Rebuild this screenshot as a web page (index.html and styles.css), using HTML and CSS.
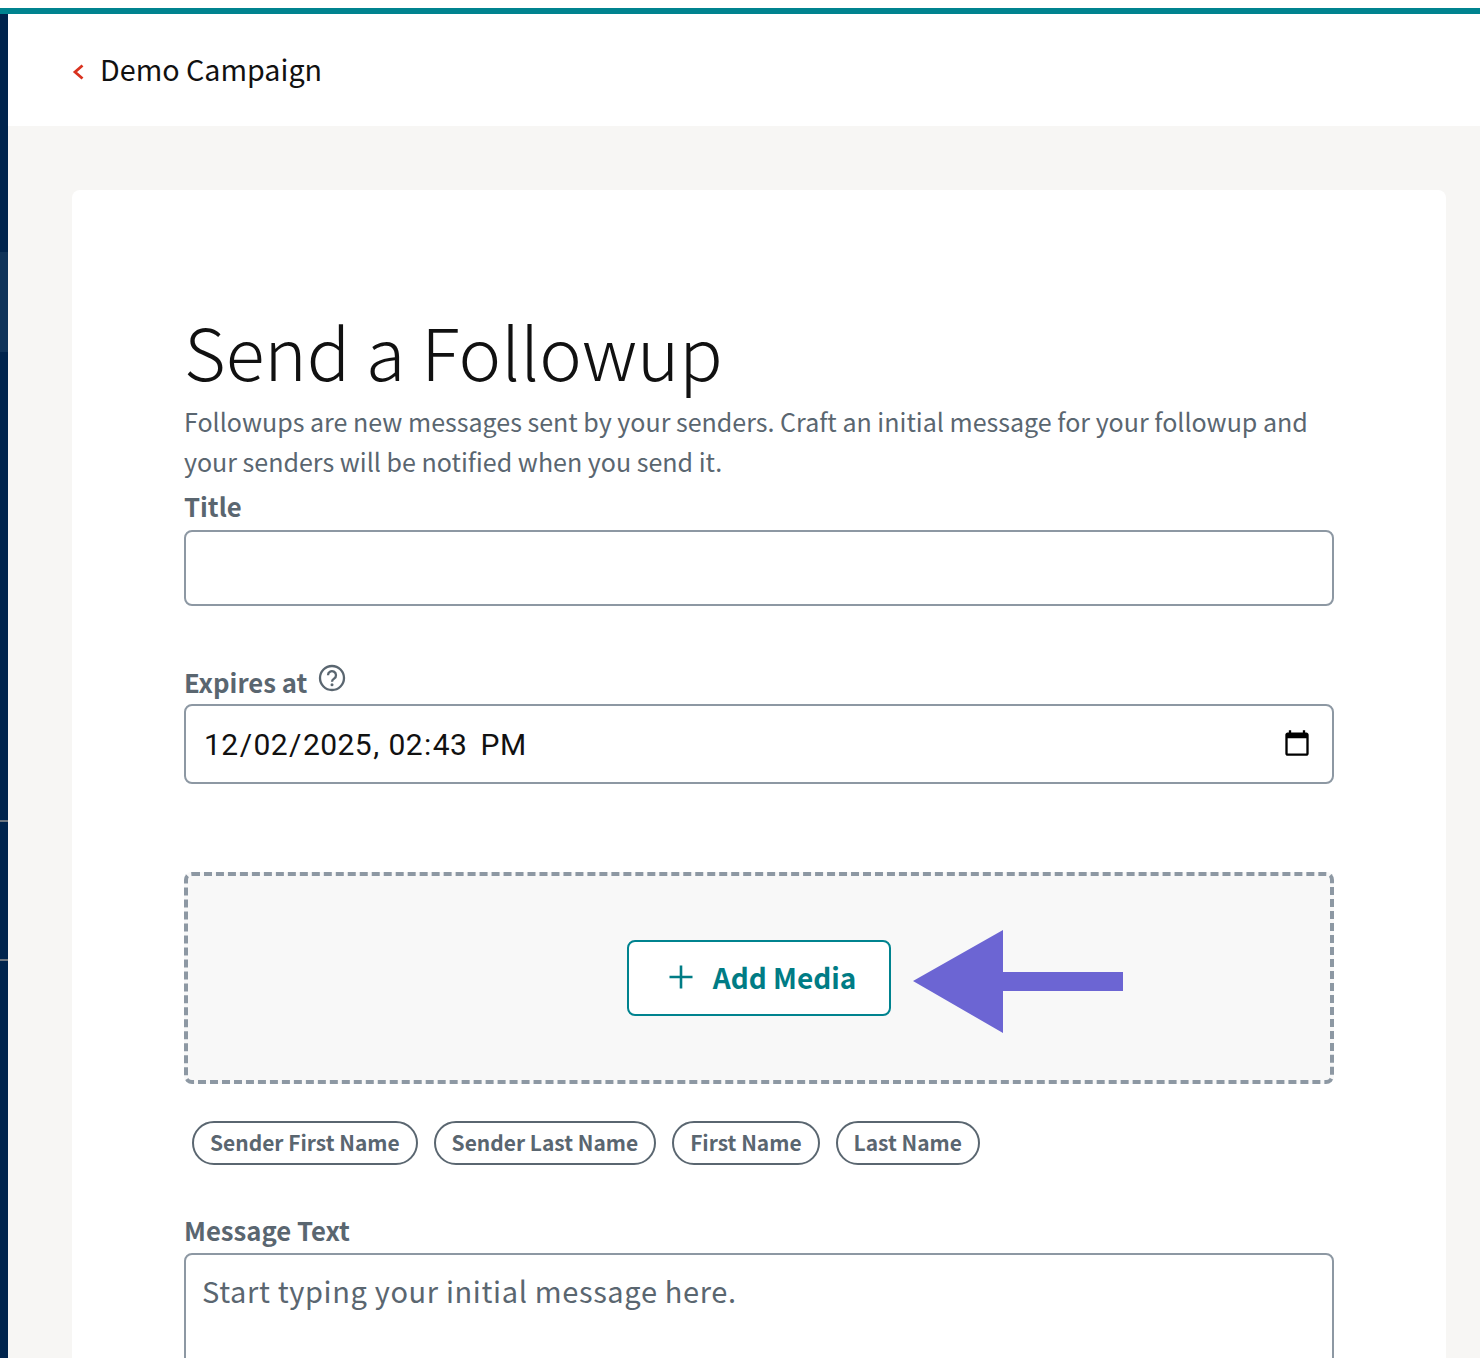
FILE: index.html
```html
<!DOCTYPE html>
<html lang="en">
<head>
    <meta charset="UTF-8">
    <meta name="viewport" content="width=device-width, initial-scale=1.0">
    <title>Send a Followup</title>
    <link rel="stylesheet" href="styles.css">
</head>
<body>
    <div class="topbar"></div>
    <div class="app">
        <aside class="sidebar">
            <span class="sidebar-band"></span>
            <span class="sidebar-line sidebar-line-first"></span>
            <span class="sidebar-line sidebar-line-second"></span>
        </aside>
        <div class="main">
            <header class="page-header">
                <a class="back-link" href="#">
                    <svg class="back-icon" width="12" height="16" viewBox="0 0 12 16" aria-hidden="true">
                        <path d="M10.500 1.500 3 8l7.500 6.500" fill="none" stroke="#d9321f" stroke-width="2.800"/>
                    </svg>
                    Demo Campaign
                </a>
            </header>
            <div class="page-body">
                <main class="card">
                    <h1 class="card-title">Send a Followup</h1>
                    <p class="card-intro">Followups are new messages sent by your senders. Craft an initial message for your followup and your senders will be notified when you send it.</p>

                    <label class="field-label title-label" for="title">Title</label>
                    <input class="text-input" id="title" type="text">

                    <label class="field-label expires-label" for="expires">
                        Expires at
                        <svg class="help-icon" width="28" height="28" viewBox="0 0 28 28" aria-hidden="true">
                            <circle cx="14" cy="14" r="12" fill="none" stroke="#5a6670" stroke-width="2.300"/>
                            <path d="M10 11.200a4 4 0 1 1 6.200 3.300c-1.500.9-2.200 1.500-2.200 3.200" fill="none" stroke="#5a6670" stroke-width="2.300"/>
                            <circle cx="14" cy="20.800" r="1.500" fill="#5a6670"/>
                        </svg>
                    </label>
                    <input class="date-input" id="expires" type="datetime-local" value="2025-12-02T14:43">

                    <div class="media-box">
                        <button class="media-button" type="button">
                            <svg width="26" height="26" viewBox="0 0 26 26" aria-hidden="true">
                                <path d="M13 1.500v23M1.500 13h23" fill="none" stroke="#007c85" stroke-width="2.600"/>
                            </svg>
                            Add Media
                        </button>
                        <svg class="media-arrow" width="210" height="104" viewBox="0 0 210 104" aria-hidden="true">
                            <path d="M0 51 90 0v42h120v19H90v42z" fill="#6c65d3"/>
                        </svg>
                    </div>

                    <div class="chips">
                        <button class="chip" type="button">Sender First Name</button>
                        <button class="chip" type="button">Sender Last Name</button>
                        <button class="chip" type="button">First Name</button>
                        <button class="chip" type="button">Last Name</button>
                    </div>

                    <label class="field-label message-label" for="message">Message Text</label>
                    <textarea class="message-input" id="message" placeholder="Start typing your initial message here."></textarea>
                </main>
            </div>
        </div>
    </div>
</body>
</html>
```

FILE: styles.css
```css
html, body {
    height: 1358px;
    overflow: hidden;
}
body {
    margin: 0;
    padding-top: 8px;
    box-sizing: border-box;
    background-color: #fff;
    font-family: "Noto Sans CJK SC", "Noto Sans", sans-serif;
    color: #5a6670;
}
.topbar {
    height: 6px;
    background-color: #00838f;
}
.app {
    display: flex;
    height: 1344px;
    overflow: hidden;
}
.sidebar {
    position: relative;
    flex: 0 0 8px;
    background-color: #00244d;
}
.sidebar-band {
    position: absolute;
    top: 238px;
    left: 0;
    right: 0;
    height: 100px;
    background-color: #0f3359;
}
.sidebar-line {
    position: absolute;
    left: 0;
    right: 0;
    height: 2px;
    background-color: #6d7680;
}
.sidebar-line-first {
    top: 806px;
}
.sidebar-line-second {
    top: 945px;
}
.main {
    flex: 1;
    min-width: 0;
    background-color: #f7f6f4;
}
.page-header {
    box-sizing: border-box;
    height: 112px;
    padding: 0 0 4px 64px;
    display: flex;
    align-items: center;
    background-color: #fff;
}
.back-link {
    display: flex;
    align-items: center;
    gap: 16px;
    color: #111;
    font-size: 28.700px;
    text-decoration: none;
}
.back-icon {
    margin-top: 7px;
}
.page-body {
    padding: 64px 34px 0 64px;
}
.card {
    height: 1200px;
    padding: 109px 112px 0;
    border-radius: 8px;
    background-color: #fff;
}
.card-title {
    margin: 0;
    font-size: 71.800px;
    font-weight: 300;
    line-height: 102px;
    color: #111;
}
.card-intro {
    margin: 0;
    font-size: 25.040px;
    line-height: 40px;
}
.field-label {
    display: block;
    font-size: 25.700px;
    font-weight: 700;
    line-height: 40px;
}
.title-label {
    margin-top: 5px;
}
.text-input, .date-input, .message-input {
    display: block;
    box-sizing: border-box;
    width: 100%;
    border: 2px solid #8d98a3;
    border-radius: 8px;
    background-color: #fff;
}
.text-input {
    height: 76px;
    margin-top: 4px;
}
.expires-label {
    display: flex;
    align-items: flex-start;
    gap: 11px;
    margin: 58px 0 4px;
    line-height: 36px;
}
.date-input {
    height: 80px;
    padding: 0 18px 0 17px;
    font-family: "Roboto", sans-serif;
    font-size: 30px;
    letter-spacing: 0.450px;
    color: #111;
}
.date-input::-webkit-datetime-edit-ampm-field {
    margin-left: 7px;
    font-size: 28px;
}
.media-box {
    position: relative;
    box-sizing: border-box;
    height: 212px;
    margin-top: 88px;
    display: flex;
    align-items: center;
    justify-content: center;
    border: 4px dashed #8d98a3;
    border-radius: 8px;
    background-color: #f8f8f8;
}
.media-button {
    box-sizing: border-box;
    display: flex;
    align-items: center;
    justify-content: center;
    gap: 19px;
    width: 264px;
    height: 76px;
    padding: 0 0 2px 6px;
    border: 2px solid #00838f;
    border-radius: 8px;
    background-color: #fff;
    color: #007c85;
    font-family: inherit;
    font-size: 28px;
    font-weight: 700;
}
.media-arrow {
    position: absolute;
    left: 725px;
    top: 54px;
}
.chips {
    display: flex;
    gap: 16px;
    margin: 37px 0 0 8px;
}
.chip {
    box-sizing: border-box;
    height: 44px;
    padding: 0 16px 3px;
    border: 2px solid #5a6670;
    border-radius: 22px;
    background-color: #fff;
    color: #5a6670;
    font-family: inherit;
    font-size: 20.950px;
    font-weight: 700;
}
.message-label {
    margin-top: 45px;
}
.message-input {
    height: 200px;
    margin-top: 3px;
    padding: 14px 16px;
    font-family: inherit;
    font-size: 29px;
    letter-spacing: 0.650px;
    resize: none;
}
.message-input::placeholder {
    color: #5a6670;
    opacity: 1;
}
```
